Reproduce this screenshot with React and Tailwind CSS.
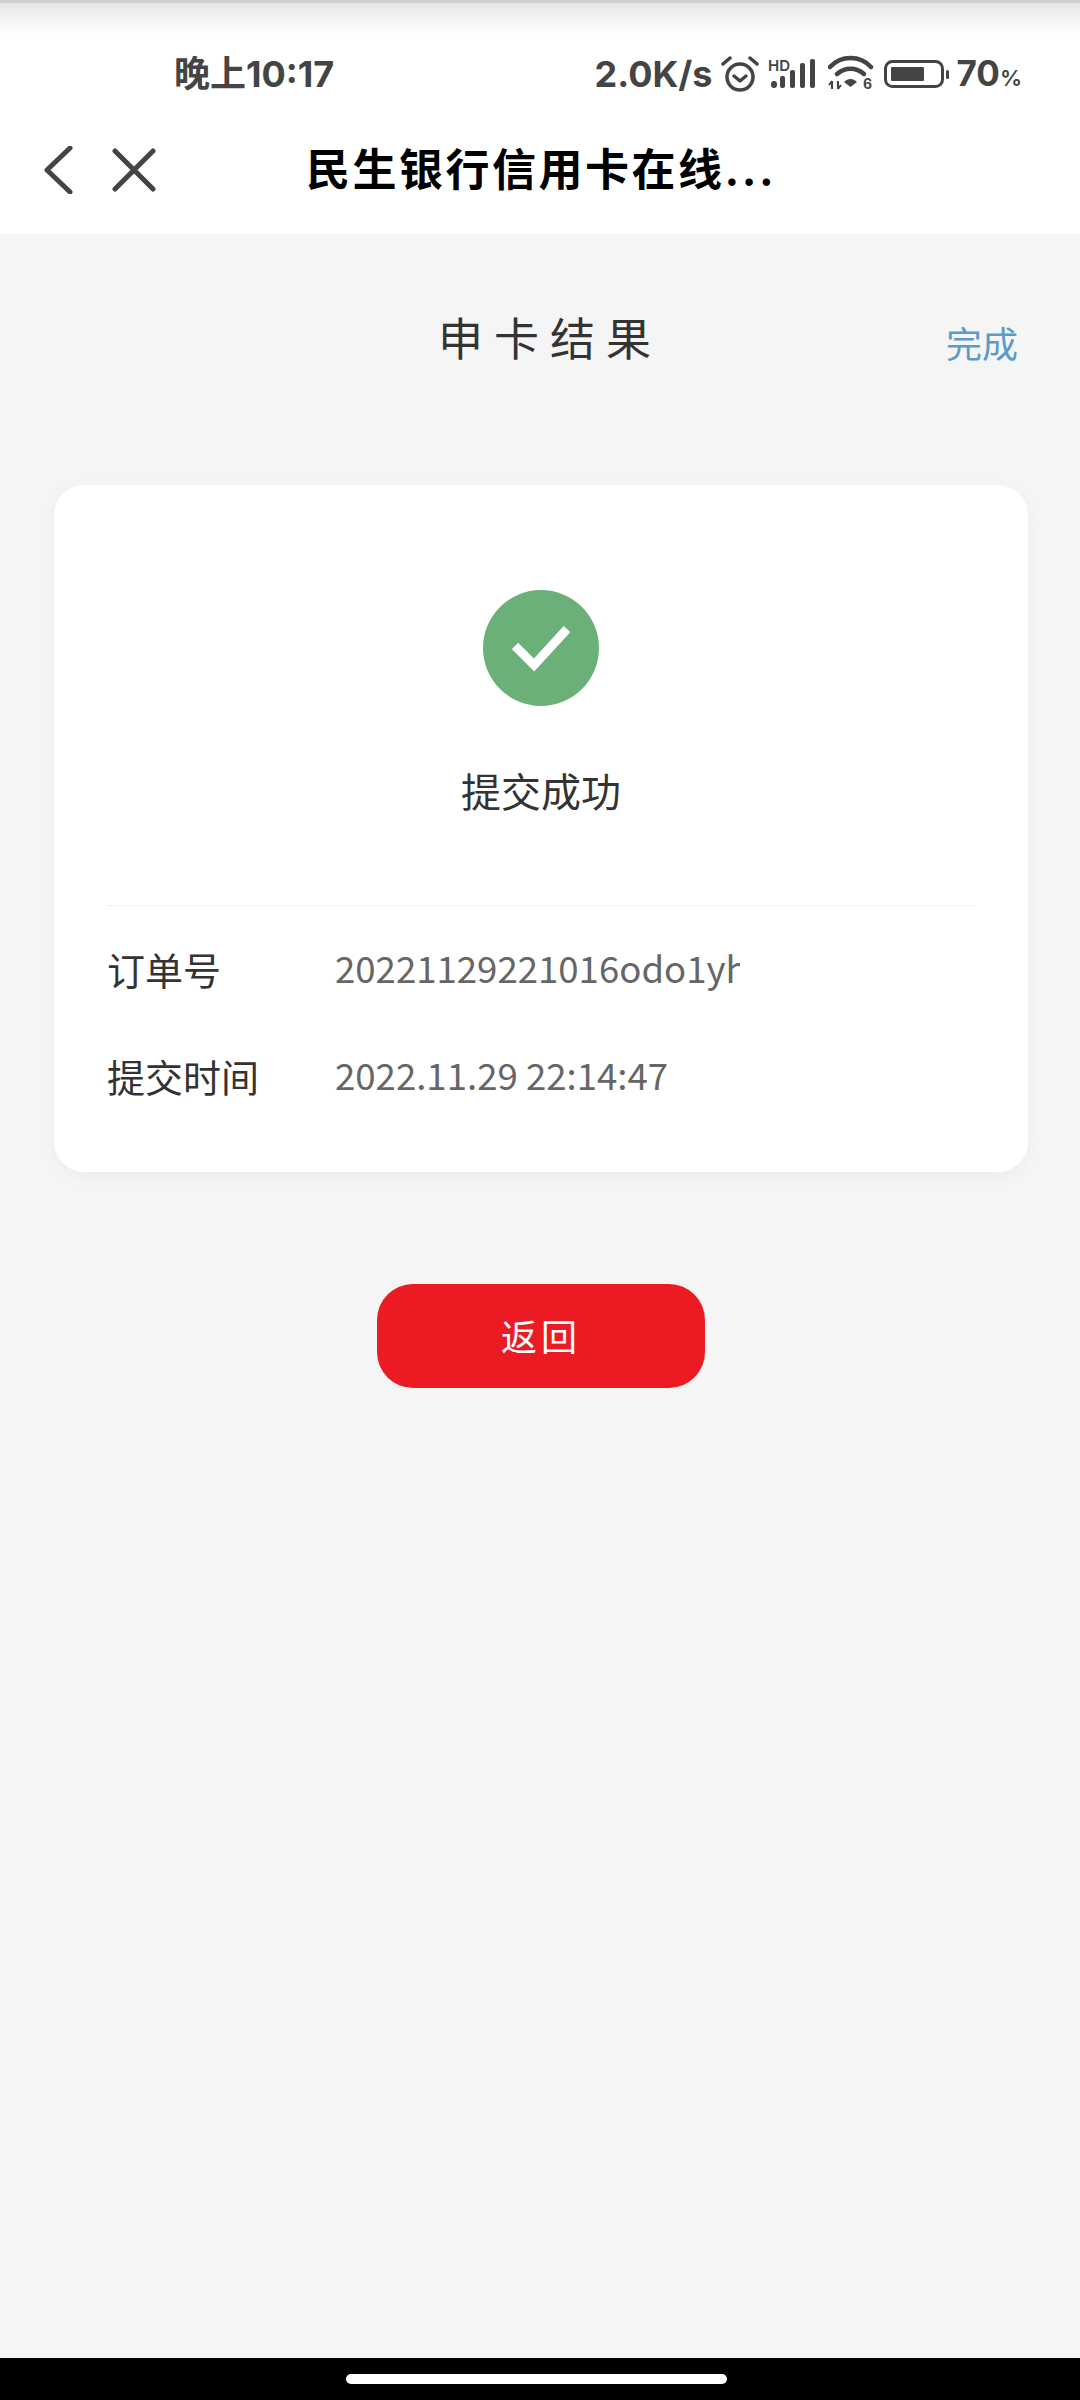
const CJK = "font-['Inter','Noto_Sans_CJK_SC',sans-serif]";

function AlarmIcon() {
  return (
    <svg width="38" height="36" viewBox="0 0 38 36" fill="none" stroke="#444" strokeLinecap="round">
      <circle cx="19" cy="21" r="13" strokeWidth="3.500" />
      <path d="M13 20l6 5 6-5" strokeWidth="3.500" strokeLinejoin="round" />
      <path d="M2 8l7-6M36 8l-7-6" strokeWidth="3.500" />
    </svg>
  );
}

function SignalIcon() {
  return (
    <svg width="48" height="36" viewBox="0 0 48 36">
      <text x="0" y="15" fontSize="15" fontWeight="600" fill="#444" fontFamily="Inter, sans-serif">HD</text>
      <rect x="3" y="25" width="6" height="7" rx="3" fill="#444" />
      <rect x="12" y="20" width="5" height="12" rx="2" fill="#444" />
      <rect x="22" y="14" width="5" height="18" rx="2" fill="#444" />
      <rect x="32" y="7" width="5" height="25" rx="2" fill="#444" />
      <rect x="42" y="3" width="5" height="29" rx="2" fill="#444" />
    </svg>
  );
}

function WifiIcon() {
  return (
    <svg width="46" height="38" viewBox="0 0 46 38" fill="none">
      <path d="M2 12C13 0 32 0 43 12" stroke="#444" strokeWidth="4.500" strokeLinecap="round" />
      <path d="M9 19c8-7 19-7 27 0" stroke="#444" strokeWidth="4.500" strokeLinecap="round" />
      <path d="M16 27c4-4 9-4 13 0l-6.500 5z" fill="#444" />
      <path d="M4 26v8M1 30l3-4M10 26v8M13 30l-3 4" stroke="#444" strokeWidth="2" />
      <text x="35" y="34" fontSize="14" fontWeight="700" fill="#444" fontFamily="Inter, sans-serif">6</text>
    </svg>
  );
}

function BatteryIcon() {
  return (
    <svg width="66" height="28" viewBox="0 0 66 28" fill="none">
      <rect x="1.500" y="1.500" width="57" height="25" rx="7" stroke="#444" strokeWidth="3" />
      <rect x="7" y="7" width="33" height="14" rx="1" fill="#444" />
      <rect x="62" y="10" width="3" height="9" rx="1.500" fill="#444" />
    </svg>
  );
}

export default function App() {
  return (
    <div className={`flex h-[2400px] w-[1080px] flex-col bg-[#f5f5f5] ${CJK}`}>
      {/* status bar + nav */}
      <div className="h-[234px] shrink-0 bg-white">
        <div className="h-[106px] border-t-[3px] border-[#d0d0d0] bg-gradient-to-b from-[#e6e6e6] via-white via-[30%] to-white pl-[174px] pr-[58px] pt-[44px]">
          <div className="flex items-center justify-between text-[#444]">
            <span className="text-[36px] leading-[46px] font-bold">晚上10:17</span>
            <div className="flex items-center">
              <span className="text-[36px] leading-[46px] font-bold">2.0K/s</span>
              <div className="ml-[9px]"><AlarmIcon /></div>
              <div className="ml-[9px]"><SignalIcon /></div>
              <div className="ml-[12px]"><WifiIcon /></div>
              <div className="ml-[10px]"><BatteryIcon /></div>
              <span className="ml-[6px] mt-[3px] text-[35px] leading-[46px] font-bold">70<span className="text-[22px] font-semibold">%</span></span>
            </div>
          </div>
        </div>
        <div className="flex h-[128px] items-center pl-[44px]">
          <svg width="30" height="48" viewBox="0 0 30 48" fill="none" stroke="#444" strokeWidth="5" strokeLinecap="round" strokeLinejoin="round">
            <path d="M26 2L3 24l23 22" />
          </svg>
          <svg className="ml-[38px]" width="44" height="44" viewBox="0 0 44 44" fill="none" stroke="#444" strokeWidth="5" strokeLinecap="round">
            <path d="M3 3l38 38M41 3L3 41" />
          </svg>
          <h1 className="ml-[150px] text-[44px] leading-[56px] font-bold tracking-[2.500px] text-black">民生银行信用卡在线...</h1>
        </div>
      </div>

      {/* page title */}
      <div className="flex items-center justify-between pt-[76px] pl-[438px] pr-[62px]">
        <h2 className="text-[45px] leading-[60px] tracking-[11px] text-[#333]">申卡结果</h2>
        <span className="mt-[10px] text-[36px] leading-[50px] text-[#5a9bc9]">完成</span>
      </div>

      {/* result card */}
      <div className="mt-[115px] ml-[54px] mr-[52px] h-[687px] rounded-[30px] bg-white px-[53px] pt-[105px] shadow-[0_4px_16px_rgba(0,0,0,0.04)]">
        <div className="flex flex-col items-center">
          <div className="flex h-[116px] w-[116px] items-center justify-center rounded-full bg-[#6ab078]">
            <svg width="58" height="50" viewBox="0 0 58 50" fill="none" stroke="#fff" strokeWidth="9">
              <path d="M3 23l19 19L55 6" />
            </svg>
          </div>
          <div className="mt-[59px] text-[40px] leading-[56px] text-[#333]">提交成功</div>
        </div>
        <div className="mt-[84px] border-t border-[#f0f0f0]">
          <div className="mt-[37px] flex items-center">
            <span className="w-[228px] text-[38px] leading-[50px] text-[#333]">订单号</span>
            <span className="w-[405px] overflow-hidden pb-[6px] font-['Noto_Sans_CJK_SC',sans-serif] text-[36.600px] leading-[50px] whitespace-nowrap text-[#666]">20221129221016odo1yh</span>
          </div>
          <div className="mt-[51px] flex items-center">
            <span className="w-[228px] text-[38px] leading-[50px] text-[#333]">提交时间</span>
            <span className="pb-[6px] font-['Noto_Sans_CJK_SC',sans-serif] text-[36.600px] leading-[50px] whitespace-nowrap text-[#666]">2022.11.29 22:14:47</span>
          </div>
        </div>
      </div>

      {/* back button */}
      <button className="mt-[112px] ml-[377px] flex h-[104px] w-[328px] items-center justify-center rounded-[36px] bg-[#ec1b23] pt-[3px] text-[36px] tracking-[4px] text-white">
        返回
      </button>

      {/* gesture bar */}
      <div className="mt-auto h-[42px] shrink-0 bg-black pl-[346px] pt-[16px]">
        <div className="h-[10px] w-[381px] rounded-full bg-white" />
      </div>
    </div>
  );
}
